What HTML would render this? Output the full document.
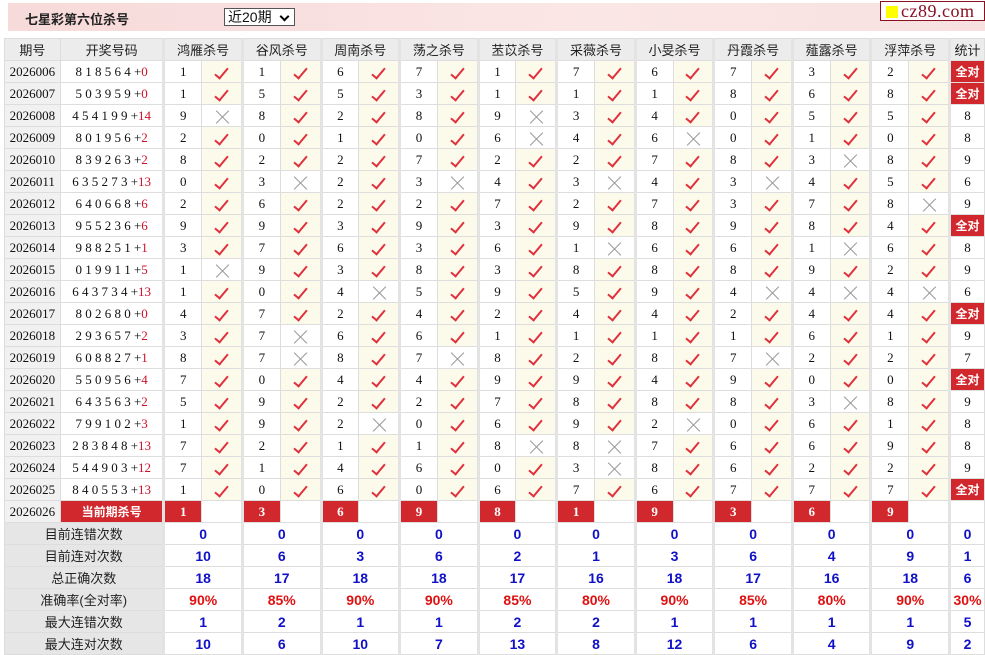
<!DOCTYPE html>
<html><head><meta charset="utf-8">
<style>
*{margin:0;padding:0;box-sizing:border-box}
body{width:985px;height:655px;background:#fff;font-family:"Liberation Serif","Noto Serif CJK SC",serif;font-size:13px;color:#111;position:relative;overflow:hidden}
.hd{position:absolute;left:8px;top:3px;width:977px;height:28px;background:linear-gradient(90deg,#f7dada,#fbe6e6 60%,#f8e0e0);}
.hd b{position:absolute;left:17px;top:6px;font:bold 13px "Liberation Sans","Noto Sans CJK SC",sans-serif;color:#222}
.sel{position:absolute;left:224px;top:8px;width:71px;height:18px;border:1px solid #555;background:#fff;font:14px "Liberation Sans","Noto Sans CJK SC",sans-serif;padding-left:3px;line-height:16px}
.sel::after{content:"";position:absolute;right:6px;top:4px;width:5px;height:5px;border:solid #000;border-width:0 2px 2px 0;transform:rotate(45deg)}
.logo{position:absolute;left:880px;top:1px;width:105px;height:20px;border:1px solid #8a1020;background:#fff;color:#8a1020;font:18px "Liberation Serif",serif;line-height:18px;padding-left:20px;letter-spacing:0.5px}
.logo::before{content:"";position:absolute;left:5px;top:4px;width:12px;height:12px;background:#ff0}
table{position:absolute;left:4px;top:38px;border-collapse:collapse;table-layout:fixed}
td,th{border:1px solid #ddd;height:22px;text-align:center;padding:0;white-space:nowrap}
th{background:#ececec;font:normal 13px "Liberation Sans","Noto Sans CJK SC",sans-serif;color:#222;height:22px}
.g{border-left:3px solid #e3e3e3}
td.p{background:#f1f1f1;font-size:13px}
td.k{background:#fcfaea}
.y{display:inline-block;width:7px;height:14px;border:solid #e0303c;border-width:0 2px 2px 0;transform:rotate(40deg);margin-top:-2px;vertical-align:middle}
.x{position:relative;display:inline-block;width:14px;height:14px;vertical-align:middle}
.x::before,.x::after{content:"";position:absolute;left:7px;top:-2px;width:1px;height:18px;background:#999;transform:rotate(45deg)}
.x::after{transform:rotate(-45deg)}
i{font-style:normal;color:#d0102a}
.q{background:#d1282e;color:#fff;font-weight:bold;font-family:"Liberation Sans","Noto Sans CJK SC",sans-serif;font-size:12px}
.r{background:#d1282e;color:#fff;font-weight:bold}
.s td{font:bold 14px "Liberation Sans",sans-serif;color:#1010c8}
.s td.l{background:#e6e6e6;font:13px "Liberation Sans","Noto Sans CJK SC",sans-serif;color:#222}
.s td.pc{color:#e01010}
</style></head><body>
<div class="hd"><b>七星彩第六位杀号</b></div>
<div class="sel">近20期</div>
<div class="logo">cz89.com</div>
<table>
<colgroup><col style="width:56px"><col style="width:104px">
<col style="width:38px"><col style="width:41px"><col style="width:38px"><col style="width:41px"><col style="width:38px"><col style="width:41px"><col style="width:38px"><col style="width:41px"><col style="width:38px"><col style="width:41px"><col style="width:38px"><col style="width:41px"><col style="width:38px"><col style="width:41px"><col style="width:38px"><col style="width:41px"><col style="width:38px"><col style="width:41px"><col style="width:38px"><col style="width:41px">
<col style="width:35px"></colgroup>
<tr><th>期号</th><th>开奖号码</th><th colspan="2" class="g">鸿雁杀号</th><th colspan="2" class="g">谷风杀号</th><th colspan="2" class="g">周南杀号</th><th colspan="2" class="g">荡之杀号</th><th colspan="2" class="g">苤苡杀号</th><th colspan="2" class="g">采薇杀号</th><th colspan="2" class="g">小旻杀号</th><th colspan="2" class="g">丹霞杀号</th><th colspan="2" class="g">薤露杀号</th><th colspan="2" class="g">浮萍杀号</th><th class="g">统计</th></tr>
<tr><td class="p">2026006</td><td>8 1 8 5 6 4 +<i>0</i></td><td class="g">1</td><td class="k"><span class="y"></span></td><td class="g">1</td><td class="k"><span class="y"></span></td><td class="g">6</td><td class="k"><span class="y"></span></td><td class="g">7</td><td class="k"><span class="y"></span></td><td class="g">1</td><td class="k"><span class="y"></span></td><td class="g">7</td><td class="k"><span class="y"></span></td><td class="g">6</td><td class="k"><span class="y"></span></td><td class="g">7</td><td class="k"><span class="y"></span></td><td class="g">3</td><td class="k"><span class="y"></span></td><td class="g">2</td><td class="k"><span class="y"></span></td><td class="g q">全对</td></tr>
<tr><td class="p">2026007</td><td>5 0 3 9 5 9 +<i>0</i></td><td class="g">1</td><td class="k"><span class="y"></span></td><td class="g">5</td><td class="k"><span class="y"></span></td><td class="g">5</td><td class="k"><span class="y"></span></td><td class="g">3</td><td class="k"><span class="y"></span></td><td class="g">1</td><td class="k"><span class="y"></span></td><td class="g">1</td><td class="k"><span class="y"></span></td><td class="g">1</td><td class="k"><span class="y"></span></td><td class="g">8</td><td class="k"><span class="y"></span></td><td class="g">6</td><td class="k"><span class="y"></span></td><td class="g">8</td><td class="k"><span class="y"></span></td><td class="g q">全对</td></tr>
<tr><td class="p">2026008</td><td>4 5 4 1 9 9 +<i>14</i></td><td class="g">9</td><td><span class="x"></span></td><td class="g">8</td><td class="k"><span class="y"></span></td><td class="g">2</td><td class="k"><span class="y"></span></td><td class="g">8</td><td class="k"><span class="y"></span></td><td class="g">9</td><td><span class="x"></span></td><td class="g">3</td><td class="k"><span class="y"></span></td><td class="g">4</td><td class="k"><span class="y"></span></td><td class="g">0</td><td class="k"><span class="y"></span></td><td class="g">5</td><td class="k"><span class="y"></span></td><td class="g">5</td><td class="k"><span class="y"></span></td><td class="g">8</td></tr>
<tr><td class="p">2026009</td><td>8 0 1 9 5 6 +<i>2</i></td><td class="g">2</td><td class="k"><span class="y"></span></td><td class="g">0</td><td class="k"><span class="y"></span></td><td class="g">1</td><td class="k"><span class="y"></span></td><td class="g">0</td><td class="k"><span class="y"></span></td><td class="g">6</td><td><span class="x"></span></td><td class="g">4</td><td class="k"><span class="y"></span></td><td class="g">6</td><td><span class="x"></span></td><td class="g">0</td><td class="k"><span class="y"></span></td><td class="g">1</td><td class="k"><span class="y"></span></td><td class="g">0</td><td class="k"><span class="y"></span></td><td class="g">8</td></tr>
<tr><td class="p">2026010</td><td>8 3 9 2 6 3 +<i>2</i></td><td class="g">8</td><td class="k"><span class="y"></span></td><td class="g">2</td><td class="k"><span class="y"></span></td><td class="g">2</td><td class="k"><span class="y"></span></td><td class="g">7</td><td class="k"><span class="y"></span></td><td class="g">2</td><td class="k"><span class="y"></span></td><td class="g">2</td><td class="k"><span class="y"></span></td><td class="g">7</td><td class="k"><span class="y"></span></td><td class="g">8</td><td class="k"><span class="y"></span></td><td class="g">3</td><td><span class="x"></span></td><td class="g">8</td><td class="k"><span class="y"></span></td><td class="g">9</td></tr>
<tr><td class="p">2026011</td><td>6 3 5 2 7 3 +<i>13</i></td><td class="g">0</td><td class="k"><span class="y"></span></td><td class="g">3</td><td><span class="x"></span></td><td class="g">2</td><td class="k"><span class="y"></span></td><td class="g">3</td><td><span class="x"></span></td><td class="g">4</td><td class="k"><span class="y"></span></td><td class="g">3</td><td><span class="x"></span></td><td class="g">4</td><td class="k"><span class="y"></span></td><td class="g">3</td><td><span class="x"></span></td><td class="g">4</td><td class="k"><span class="y"></span></td><td class="g">5</td><td class="k"><span class="y"></span></td><td class="g">6</td></tr>
<tr><td class="p">2026012</td><td>6 4 0 6 6 8 +<i>6</i></td><td class="g">2</td><td class="k"><span class="y"></span></td><td class="g">6</td><td class="k"><span class="y"></span></td><td class="g">2</td><td class="k"><span class="y"></span></td><td class="g">2</td><td class="k"><span class="y"></span></td><td class="g">7</td><td class="k"><span class="y"></span></td><td class="g">2</td><td class="k"><span class="y"></span></td><td class="g">7</td><td class="k"><span class="y"></span></td><td class="g">3</td><td class="k"><span class="y"></span></td><td class="g">7</td><td class="k"><span class="y"></span></td><td class="g">8</td><td><span class="x"></span></td><td class="g">9</td></tr>
<tr><td class="p">2026013</td><td>9 5 5 2 3 6 +<i>6</i></td><td class="g">9</td><td class="k"><span class="y"></span></td><td class="g">9</td><td class="k"><span class="y"></span></td><td class="g">3</td><td class="k"><span class="y"></span></td><td class="g">9</td><td class="k"><span class="y"></span></td><td class="g">3</td><td class="k"><span class="y"></span></td><td class="g">9</td><td class="k"><span class="y"></span></td><td class="g">8</td><td class="k"><span class="y"></span></td><td class="g">9</td><td class="k"><span class="y"></span></td><td class="g">8</td><td class="k"><span class="y"></span></td><td class="g">4</td><td class="k"><span class="y"></span></td><td class="g q">全对</td></tr>
<tr><td class="p">2026014</td><td>9 8 8 2 5 1 +<i>1</i></td><td class="g">3</td><td class="k"><span class="y"></span></td><td class="g">7</td><td class="k"><span class="y"></span></td><td class="g">6</td><td class="k"><span class="y"></span></td><td class="g">3</td><td class="k"><span class="y"></span></td><td class="g">6</td><td class="k"><span class="y"></span></td><td class="g">1</td><td><span class="x"></span></td><td class="g">6</td><td class="k"><span class="y"></span></td><td class="g">6</td><td class="k"><span class="y"></span></td><td class="g">1</td><td><span class="x"></span></td><td class="g">6</td><td class="k"><span class="y"></span></td><td class="g">8</td></tr>
<tr><td class="p">2026015</td><td>0 1 9 9 1 1 +<i>5</i></td><td class="g">1</td><td><span class="x"></span></td><td class="g">9</td><td class="k"><span class="y"></span></td><td class="g">3</td><td class="k"><span class="y"></span></td><td class="g">8</td><td class="k"><span class="y"></span></td><td class="g">3</td><td class="k"><span class="y"></span></td><td class="g">8</td><td class="k"><span class="y"></span></td><td class="g">8</td><td class="k"><span class="y"></span></td><td class="g">8</td><td class="k"><span class="y"></span></td><td class="g">9</td><td class="k"><span class="y"></span></td><td class="g">2</td><td class="k"><span class="y"></span></td><td class="g">9</td></tr>
<tr><td class="p">2026016</td><td>6 4 3 7 3 4 +<i>13</i></td><td class="g">1</td><td class="k"><span class="y"></span></td><td class="g">0</td><td class="k"><span class="y"></span></td><td class="g">4</td><td><span class="x"></span></td><td class="g">5</td><td class="k"><span class="y"></span></td><td class="g">9</td><td class="k"><span class="y"></span></td><td class="g">5</td><td class="k"><span class="y"></span></td><td class="g">9</td><td class="k"><span class="y"></span></td><td class="g">4</td><td><span class="x"></span></td><td class="g">4</td><td><span class="x"></span></td><td class="g">4</td><td><span class="x"></span></td><td class="g">6</td></tr>
<tr><td class="p">2026017</td><td>8 0 2 6 8 0 +<i>0</i></td><td class="g">4</td><td class="k"><span class="y"></span></td><td class="g">7</td><td class="k"><span class="y"></span></td><td class="g">2</td><td class="k"><span class="y"></span></td><td class="g">4</td><td class="k"><span class="y"></span></td><td class="g">2</td><td class="k"><span class="y"></span></td><td class="g">4</td><td class="k"><span class="y"></span></td><td class="g">4</td><td class="k"><span class="y"></span></td><td class="g">2</td><td class="k"><span class="y"></span></td><td class="g">4</td><td class="k"><span class="y"></span></td><td class="g">4</td><td class="k"><span class="y"></span></td><td class="g q">全对</td></tr>
<tr><td class="p">2026018</td><td>2 9 3 6 5 7 +<i>2</i></td><td class="g">3</td><td class="k"><span class="y"></span></td><td class="g">7</td><td><span class="x"></span></td><td class="g">6</td><td class="k"><span class="y"></span></td><td class="g">6</td><td class="k"><span class="y"></span></td><td class="g">1</td><td class="k"><span class="y"></span></td><td class="g">1</td><td class="k"><span class="y"></span></td><td class="g">1</td><td class="k"><span class="y"></span></td><td class="g">1</td><td class="k"><span class="y"></span></td><td class="g">6</td><td class="k"><span class="y"></span></td><td class="g">1</td><td class="k"><span class="y"></span></td><td class="g">9</td></tr>
<tr><td class="p">2026019</td><td>6 0 8 8 2 7 +<i>1</i></td><td class="g">8</td><td class="k"><span class="y"></span></td><td class="g">7</td><td><span class="x"></span></td><td class="g">8</td><td class="k"><span class="y"></span></td><td class="g">7</td><td><span class="x"></span></td><td class="g">8</td><td class="k"><span class="y"></span></td><td class="g">2</td><td class="k"><span class="y"></span></td><td class="g">8</td><td class="k"><span class="y"></span></td><td class="g">7</td><td><span class="x"></span></td><td class="g">2</td><td class="k"><span class="y"></span></td><td class="g">2</td><td class="k"><span class="y"></span></td><td class="g">7</td></tr>
<tr><td class="p">2026020</td><td>5 5 0 9 5 6 +<i>4</i></td><td class="g">7</td><td class="k"><span class="y"></span></td><td class="g">0</td><td class="k"><span class="y"></span></td><td class="g">4</td><td class="k"><span class="y"></span></td><td class="g">4</td><td class="k"><span class="y"></span></td><td class="g">9</td><td class="k"><span class="y"></span></td><td class="g">9</td><td class="k"><span class="y"></span></td><td class="g">4</td><td class="k"><span class="y"></span></td><td class="g">9</td><td class="k"><span class="y"></span></td><td class="g">0</td><td class="k"><span class="y"></span></td><td class="g">0</td><td class="k"><span class="y"></span></td><td class="g q">全对</td></tr>
<tr><td class="p">2026021</td><td>6 4 3 5 6 3 +<i>2</i></td><td class="g">5</td><td class="k"><span class="y"></span></td><td class="g">9</td><td class="k"><span class="y"></span></td><td class="g">2</td><td class="k"><span class="y"></span></td><td class="g">2</td><td class="k"><span class="y"></span></td><td class="g">7</td><td class="k"><span class="y"></span></td><td class="g">8</td><td class="k"><span class="y"></span></td><td class="g">8</td><td class="k"><span class="y"></span></td><td class="g">8</td><td class="k"><span class="y"></span></td><td class="g">3</td><td><span class="x"></span></td><td class="g">8</td><td class="k"><span class="y"></span></td><td class="g">9</td></tr>
<tr><td class="p">2026022</td><td>7 9 9 1 0 2 +<i>3</i></td><td class="g">1</td><td class="k"><span class="y"></span></td><td class="g">9</td><td class="k"><span class="y"></span></td><td class="g">2</td><td><span class="x"></span></td><td class="g">0</td><td class="k"><span class="y"></span></td><td class="g">6</td><td class="k"><span class="y"></span></td><td class="g">9</td><td class="k"><span class="y"></span></td><td class="g">2</td><td><span class="x"></span></td><td class="g">0</td><td class="k"><span class="y"></span></td><td class="g">6</td><td class="k"><span class="y"></span></td><td class="g">1</td><td class="k"><span class="y"></span></td><td class="g">8</td></tr>
<tr><td class="p">2026023</td><td>2 8 3 8 4 8 +<i>13</i></td><td class="g">7</td><td class="k"><span class="y"></span></td><td class="g">2</td><td class="k"><span class="y"></span></td><td class="g">1</td><td class="k"><span class="y"></span></td><td class="g">1</td><td class="k"><span class="y"></span></td><td class="g">8</td><td><span class="x"></span></td><td class="g">8</td><td><span class="x"></span></td><td class="g">7</td><td class="k"><span class="y"></span></td><td class="g">6</td><td class="k"><span class="y"></span></td><td class="g">6</td><td class="k"><span class="y"></span></td><td class="g">9</td><td class="k"><span class="y"></span></td><td class="g">8</td></tr>
<tr><td class="p">2026024</td><td>5 4 4 9 0 3 +<i>12</i></td><td class="g">7</td><td class="k"><span class="y"></span></td><td class="g">1</td><td class="k"><span class="y"></span></td><td class="g">4</td><td class="k"><span class="y"></span></td><td class="g">6</td><td class="k"><span class="y"></span></td><td class="g">0</td><td class="k"><span class="y"></span></td><td class="g">3</td><td><span class="x"></span></td><td class="g">8</td><td class="k"><span class="y"></span></td><td class="g">6</td><td class="k"><span class="y"></span></td><td class="g">2</td><td class="k"><span class="y"></span></td><td class="g">2</td><td class="k"><span class="y"></span></td><td class="g">9</td></tr>
<tr><td class="p">2026025</td><td>8 4 0 5 5 3 +<i>13</i></td><td class="g">1</td><td class="k"><span class="y"></span></td><td class="g">0</td><td class="k"><span class="y"></span></td><td class="g">6</td><td class="k"><span class="y"></span></td><td class="g">0</td><td class="k"><span class="y"></span></td><td class="g">6</td><td class="k"><span class="y"></span></td><td class="g">7</td><td class="k"><span class="y"></span></td><td class="g">6</td><td class="k"><span class="y"></span></td><td class="g">7</td><td class="k"><span class="y"></span></td><td class="g">7</td><td class="k"><span class="y"></span></td><td class="g">7</td><td class="k"><span class="y"></span></td><td class="g q">全对</td></tr>
<tr><td class="p">2026026</td><td class="q">当前期杀号</td><td class="g r">1</td><td></td><td class="g r">3</td><td></td><td class="g r">6</td><td></td><td class="g r">9</td><td></td><td class="g r">8</td><td></td><td class="g r">1</td><td></td><td class="g r">9</td><td></td><td class="g r">3</td><td></td><td class="g r">6</td><td></td><td class="g r">9</td><td></td><td class="g"></td></tr>
<tbody class="s">
<tr><td colspan="2" class="l">目前连错次数</td><td colspan="2" class="g">0</td><td colspan="2" class="g">0</td><td colspan="2" class="g">0</td><td colspan="2" class="g">0</td><td colspan="2" class="g">0</td><td colspan="2" class="g">0</td><td colspan="2" class="g">0</td><td colspan="2" class="g">0</td><td colspan="2" class="g">0</td><td colspan="2" class="g">0</td><td class="g">0</td></tr>
<tr><td colspan="2" class="l">目前连对次数</td><td colspan="2" class="g">10</td><td colspan="2" class="g">6</td><td colspan="2" class="g">3</td><td colspan="2" class="g">6</td><td colspan="2" class="g">2</td><td colspan="2" class="g">1</td><td colspan="2" class="g">3</td><td colspan="2" class="g">6</td><td colspan="2" class="g">4</td><td colspan="2" class="g">9</td><td class="g">1</td></tr>
<tr><td colspan="2" class="l">总正确次数</td><td colspan="2" class="g">18</td><td colspan="2" class="g">17</td><td colspan="2" class="g">18</td><td colspan="2" class="g">18</td><td colspan="2" class="g">17</td><td colspan="2" class="g">16</td><td colspan="2" class="g">18</td><td colspan="2" class="g">17</td><td colspan="2" class="g">16</td><td colspan="2" class="g">18</td><td class="g">6</td></tr>
<tr><td colspan="2" class="l">准确率(全对率)</td><td colspan="2" class="g pc">90%</td><td colspan="2" class="g pc">85%</td><td colspan="2" class="g pc">90%</td><td colspan="2" class="g pc">90%</td><td colspan="2" class="g pc">85%</td><td colspan="2" class="g pc">80%</td><td colspan="2" class="g pc">90%</td><td colspan="2" class="g pc">85%</td><td colspan="2" class="g pc">80%</td><td colspan="2" class="g pc">90%</td><td class="g pc">30%</td></tr>
<tr><td colspan="2" class="l">最大连错次数</td><td colspan="2" class="g">1</td><td colspan="2" class="g">2</td><td colspan="2" class="g">1</td><td colspan="2" class="g">1</td><td colspan="2" class="g">2</td><td colspan="2" class="g">2</td><td colspan="2" class="g">1</td><td colspan="2" class="g">1</td><td colspan="2" class="g">1</td><td colspan="2" class="g">1</td><td class="g">5</td></tr>
<tr><td colspan="2" class="l">最大连对次数</td><td colspan="2" class="g">10</td><td colspan="2" class="g">6</td><td colspan="2" class="g">10</td><td colspan="2" class="g">7</td><td colspan="2" class="g">13</td><td colspan="2" class="g">8</td><td colspan="2" class="g">12</td><td colspan="2" class="g">6</td><td colspan="2" class="g">4</td><td colspan="2" class="g">9</td><td class="g">2</td></tr>
</tbody>
</table>
</body></html>
